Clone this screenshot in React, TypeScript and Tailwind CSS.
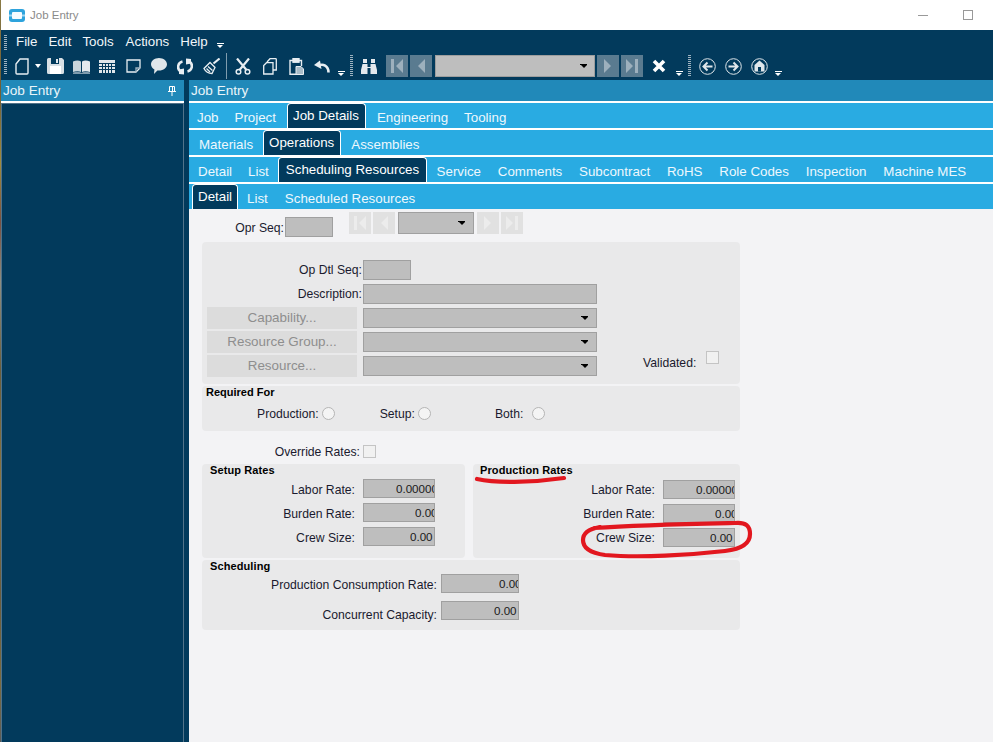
const iconColor = '#e8eef2';

type NavKind = 'first' | 'prev' | 'next' | 'last';

function Caret() {
  return <span className="block w-0 h-0 border-x-[3px] border-x-transparent border-t-[4px] border-t-white" />;
}

function OverflowCaret({ className }: { className: string }) {
  return (
    <span className={`flex flex-col items-center gap-px ${className}`}>
      <span className="block w-[7px] h-px bg-white" />
      <span className="block w-0 h-0 border-x-[3px] border-x-transparent border-t-[3px] border-t-white" />
    </span>
  );
}

function Grip({ className = '' }: { className?: string }) {
  return (
    <span className={`block w-[3px] shrink-0 bg-[repeating-linear-gradient(to_bottom,#9fb3c0_0,#9fb3c0_1px,transparent_1px,transparent_2px)] ${className}`} />
  );
}

function AppLogo() {
  return (
    <svg width="16" height="13" viewBox="0 0 16 13">
      <rect x="0" y="0" width="16" height="13" rx="3" fill="#2ea3dc" />
      <rect x="3" y="3" width="10" height="7" rx="1" fill="#f4fbff" />
      <rect x="0" y="5.500" width="3" height="2" fill="#9ed6f2" />
      <rect x="13" y="5.500" width="3" height="2" fill="#9ed6f2" />
    </svg>
  );
}

function NewDocIcon() {
  return (
    <svg width="14" height="17" viewBox="0 0 14 17" fill="none" stroke={iconColor} strokeWidth="1.400">
      <path d="M5 1h8v14a1 1 0 0 1-1 1H2a1 1 0 0 1-1-1V6z" />
    </svg>
  );
}

function SaveIcon() {
  return (
    <svg width="17" height="16" viewBox="0 0 17 16">
      <path d="M0 1.500A1.500 1.500 0 0 1 1.500 0H15l2 2v12.500a1.500 1.500 0 0 1-1.500 1.500h-14A1.500 1.500 0 0 1 0 14.500z" fill="#d7dfe4" />
      <rect x="4" y="0" width="8" height="6" fill="#023a5c" />
      <rect x="9" y="1" width="2" height="4" fill="#e4e9ed" />
      <rect x="3" y="8" width="11" height="8" fill="#fff" />
    </svg>
  );
}

function BookIcon() {
  return (
    <svg width="17" height="15" viewBox="0 0 17 15">
      <path d="M0 2.500C3 1 6 1 8 2.500V13C6 12 3 12 0 13z" fill="#c9d5dc" />
      <path d="M17 2.500C14 1 11 1 9 2.500V13C11 12 14 12 17 13z" fill="#e4e9ed" />
      <path d="M0 13.500C3 12.500 6 12.500 8.500 14C11 12.500 14 12.500 17 13.500V15H0z" fill="#7f9cae" />
    </svg>
  );
}

function GridIcon() {
  return (
    <svg width="16" height="13" viewBox="0 0 16 13">
      <rect width="16" height="13" fill="#dfe6ea" />
      <path d="M0 3.500h16M0 6.500h16M0 9.500h16M3.500 3v10M6.500 3v10M9.500 3v10M12.500 3v10" stroke="#023a5c" strokeWidth="1" />
    </svg>
  );
}

function NoteIcon() {
  return (
    <svg width="15" height="14" viewBox="0 0 15 14" fill="none" stroke={iconColor} strokeWidth="1.300">
      <path d="M1 1h13v8l-4 4H1z" />
      <path d="M14 9h-4v4" stroke="#9fb3c0" />
    </svg>
  );
}

function CommentIcon() {
  return (
    <svg width="16" height="16" viewBox="0 0 16 16">
      <path d="M8 0c4.400 0 8 2.800 8 6.300s-3.600 6.300-8 6.300c-.6 0-1.100 0-1.600-.1L3 16l.4-4.500C1.300 10.400 0 8.500 0 6.300 0 2.800 3.600 0 8 0z" fill="#dfe6ea" />
    </svg>
  );
}

function RefreshIcon() {
  return (
    <svg width="16" height="17" viewBox="0 0 16 17" fill="none" stroke={iconColor} strokeWidth="2.600">
      <path d="M5.500 3.500A5.500 5.500 0 0 0 3 13" />
      <path d="M10.500 13.500A5.500 5.500 0 0 0 13 4" />
      <path d="M9 0.500v6l5-1V1z" fill={iconColor} stroke="none" />
      <path d="M7 16.500v-6l-5 1V16z" fill={iconColor} stroke="none" />
    </svg>
  );
}

function BroomIcon() {
  return (
    <svg width="17" height="17" viewBox="0 0 17 17" fill="none" stroke={iconColor} strokeWidth="1.300">
      <path d="M16.500 0.500L10.500 5.500" strokeWidth="2" />
      <path d="M7 4.500L12 9.500 9 15.500C6 15.500 2.500 13.500 1 10.500z" />
      <path d="M5 8.500L9.500 12.500M3.500 10.500L7 14" />
    </svg>
  );
}

function ScissorsIcon() {
  return (
    <svg width="16" height="17" viewBox="0 0 16 17" fill="none" stroke={iconColor}>
      <path d="M2 0.500L11.500 12M14 0.500L4.500 12" strokeWidth="2.200" />
      <circle cx="3.500" cy="13.800" r="2.300" strokeWidth="1.500" />
      <circle cx="12.500" cy="13.800" r="2.300" strokeWidth="1.500" />
    </svg>
  );
}

function CopyIcon() {
  return (
    <svg width="14" height="17" viewBox="0 0 14 17" fill="none" stroke={iconColor} strokeWidth="1.300">
      <path d="M4 4V4L7 0.700h5.500a.8.800 0 0 1 .8.800V12H10" />
      <path d="M3.500 4.700h6.500V16H0.700V7.500z" />
    </svg>
  );
}

function PasteIcon() {
  return (
    <svg width="15" height="17" viewBox="0 0 15 17" fill="none" stroke={iconColor} strokeWidth="1.400">
      <path d="M4 2.500H1v13.800h6M10 2.500h2.500V8" />
      <rect x="4" y="0.700" width="6" height="3.500" fill={iconColor} />
      <path d="M7 8.500h5l2.500 2.500v5.500H7z" fill="#a9bcc8" stroke={iconColor} strokeWidth="1" />
    </svg>
  );
}

function UndoIcon() {
  return (
    <svg width="16" height="13" viewBox="0 0 16 13" fill="none" stroke={iconColor}>
      <path d="M14.500 12.500C14.500 6 9 3 4 6" strokeWidth="2.600" />
      <path d="M0 5l6-4.500 1.500 8.500z" fill={iconColor} stroke="none" />
    </svg>
  );
}

function PinIcon() {
  return (
    <svg width="8" height="10" viewBox="0 0 8 10" fill="none" stroke="#fff">
      <path d="M1.500 0.500h5v5h-5z" />
      <path d="M4.500 1v4" />
      <path d="M0 5.500h8M4 6v4" />
    </svg>
  );
}

function BinocularsIcon() {
  return (
    <svg width="16" height="15" viewBox="0 0 16 15">
      <rect x="2" y="0" width="4" height="4" fill="#e4e9ed" />
      <rect x="10" y="0" width="4" height="4" fill="#e4e9ed" />
      <path d="M1.500 5h5v3h3V5h5L16 11v4H9.500V9h-3v6H0v-4z" fill="#e4e9ed" />
    </svg>
  );
}

function CircleArrow({ dir }: { dir: 'left' | 'right' }) {
  return (
    <svg width="17" height="17" viewBox="0 0 17 17" fill="none" stroke="#dfe6ea">
      <circle cx="8.500" cy="8.500" r="7.800" strokeWidth="1" />
      <path d={dir === 'left' ? 'M13.500 8.500H4.500M8.500 4.500L4.500 8.500 8.500 12.500' : 'M3.500 8.500h9M8.500 4.500L12.500 8.500 8.500 12.500'} strokeWidth="2" />
    </svg>
  );
}

function HomeIcon() {
  return (
    <svg width="17" height="17" viewBox="0 0 17 17">
      <circle cx="8.500" cy="8.500" r="7.800" fill="none" stroke="#dfe6ea" />
      <path d="M8.500 2.500L13.500 7V13.500H3.500V7z" fill="#dfe6ea" />
      <rect x="7" y="9" width="3" height="4.500" fill="#023a5c" />
    </svg>
  );
}

function NavGlyph({ kind, color }: { kind: NavKind; color: string }) {
  const paths = {
    first: 'M2 1h3v14H2zM14 1v14L7 8z',
    prev: 'M12 1v14L5 8z',
    next: 'M4 1v14l7-7z',
    last: 'M11 1h3v14h-3zM2 1v14l7-7z',
  };
  return (
    <svg width="16" height="16" viewBox="0 0 16 16">
      <path d={paths[kind]} fill={color} />
    </svg>
  );
}

function ToolSlot({ children, className = 'w-[26px]' }: { children: React.ReactNode; className?: string }) {
  return <span className={`flex items-center justify-center shrink-0 ${className}`}>{children}</span>;
}

function TopNavButton({ kind, className }: { kind: NavKind; className: string }) {
  return (
    <span className={`flex items-center justify-center w-[22px] h-[22px] bg-[#5a7b90] shrink-0 ${className}`}>
      <NavGlyph kind={kind} color="#9db0bd" />
    </span>
  );
}

function Tab({ label, active, className = '' }: { label: string; active?: boolean; className?: string }) {
  if (active) {
    return (
      <span className={`flex items-start pt-[2px] h-full whitespace-nowrap bg-[#023a5c] text-white border border-b-0 border-white rounded-t-[4px] ${className}`}>
        {label}
      </span>
    );
  }
  return <span className={`flex items-center pt-[5px] h-full whitespace-nowrap text-[#eef8fd] ${className}`}>{label}</span>;
}

function Field({ className = '', children }: { className?: string; children?: React.ReactNode }) {
  return (
    <div className={`flex items-center bg-[#bebebe] border border-[#a0a0a0] ${className}`}>
      {children}
    </div>
  );
}

function ComboArrow() {
  return (
    <span className="flex flex-col items-center">
      <span className="block w-[7px] h-px bg-black" />
      <span className="block w-0 h-0 border-x-[3px] border-x-transparent border-t-[3px] border-t-black" />
    </span>
  );
}

function Combo({ className = '' }: { className?: string }) {
  return (
    <Field className={`justify-end pr-[8px] ${className}`}>
      <ComboArrow />
    </Field>
  );
}

function RateRow({
  label,
  value,
  labelClass,
  inputClass,
  pad,
  className = '',
}: {
  label: string;
  value: string;
  labelClass: string;
  inputClass: string;
  pad: string;
  className?: string;
}) {
  return (
    <div className={`flex items-start ${className}`}>
      <span className={`text-right leading-[15px] shrink-0 ${labelClass}`}>{label}</span>
      <Field className={`h-[19px] shrink-0 ${inputClass} ${pad}`}>
        <span className="block flex-1 overflow-hidden whitespace-nowrap text-[11.6px] leading-[15px] pb-px text-[#1a1a1a]">{value}</span>
      </Field>
    </div>
  );
}

function Radio() {
  return <span className="block w-[13px] h-[13px] -mt-[2px] rounded-full border border-[#b5b5b5] bg-[#f4f4f4]" />;
}

function Check({ className = '' }: { className?: string }) {
  return <span className={`block w-[13px] h-[13px] border border-[#c4c4c4] bg-[#f1f1f1] ${className}`} />;
}

function ResourceButton({ label }: { label: string }) {
  return (
    <div className="flex items-center justify-center w-[150px] h-[22px] bg-[#dcdcdc] text-[#8e8e8e] text-[13.4px]">
      {label}
    </div>
  );
}

function FormNavButton({ kind }: { kind: NavKind }) {
  return (
    <span className="flex items-center justify-center w-[22px] h-[22px] bg-[#e1e1e1]">
      <NavGlyph kind={kind} color="#ececec" />
    </span>
  );
}

export default function App() {
  return (
    <div className="relative flex w-[993px] h-[742px] overflow-hidden bg-[#023a5c] font-['Liberation_Sans',Arial,sans-serif] text-[12.2px] text-[#1a1a2e]">
      <div className="w-px shrink-0 bg-[linear-gradient(to_bottom,#8a7a45_0,#6f5d36_12%,#a08a3a_22%,#7a5040_30%,#8d8d80_38%,#6b5d3a_50%,#8a7440_65%,#6a5b3c_80%,#7b6a3e_92%,#5c5c58_100%)]" />

      <div className="flex flex-col flex-1 min-w-0">
        <header className="flex items-center h-[30px] shrink-0 bg-white pl-[8px]">
          <AppLogo />
          <span className="ml-[5px] pt-[2px] text-[#8a8a8a] text-[11.5px]">Job Entry</span>
          <span className="ml-auto block w-[10px] h-px bg-[#999] mr-[35px]" />
          <span className="block w-[10px] h-[10px] border border-[#999] mr-[20px]" />
        </header>

        <div className="flex items-center h-[24px] shrink-0 pl-[3px] text-[13.33px] text-[#f1f6f9]">
          <Grip className="h-[15px]" />
          <span className="ml-[9px] mr-[11px]">File</span>
          <span className="mr-[11px]">Edit</span>
          <span className="mr-[12px]">Tools</span>
          <span className="mr-[11px]">Actions</span>
          <span>Help</span>
          <OverflowCaret className="ml-[9px] mt-[7px]" />
        </div>

        <div className="flex items-center h-[26px] shrink-0 pl-[3px] pb-[2px]">
          <Grip className="h-[15px] mr-[4px]" />
          <ToolSlot className="w-[22px]"><NewDocIcon /></ToolSlot>
          <ToolSlot className="w-[10px]"><Caret /></ToolSlot>
          <ToolSlot className="w-[25px]"><SaveIcon /></ToolSlot>
          <ToolSlot><BookIcon /></ToolSlot>
          <ToolSlot><GridIcon /></ToolSlot>
          <ToolSlot><NoteIcon /></ToolSlot>
          <ToolSlot><CommentIcon /></ToolSlot>
          <ToolSlot><RefreshIcon /></ToolSlot>
          <ToolSlot><BroomIcon /></ToolSlot>
          <span className="block w-px h-[26px] bg-[#7f9cae] mx-[2px] shrink-0" />
          <ToolSlot className="w-[28px]"><ScissorsIcon /></ToolSlot>
          <ToolSlot><CopyIcon /></ToolSlot>
          <ToolSlot><PasteIcon /></ToolSlot>
          <ToolSlot><UndoIcon /></ToolSlot>
          <ToolSlot className="w-[12px]"><OverflowCaret className="mt-[14px]" /></ToolSlot>
          <Grip className="h-[22px] ml-[3px] mr-[4px]" />
          <ToolSlot className="w-[24px]"><BinocularsIcon /></ToolSlot>
          <TopNavButton kind="first" className="ml-[5px]" />
          <TopNavButton kind="prev" className="ml-[2px]" />
          <div className="flex items-center justify-end w-[160px] h-[22px] ml-[3px] pr-[7px] bg-[#bebebe] border border-[#9e9e9e] shrink-0">
            <ComboArrow />
          </div>
          <TopNavButton kind="next" className="ml-[2px]" />
          <TopNavButton kind="last" className="ml-[2px]" />
          <ToolSlot className="w-[32px]">
            <svg width="14" height="14" viewBox="0 0 14 14"><path d="M2 2l10 10M12 2L2 12" stroke="#fff" strokeWidth="3.600" /></svg>
          </ToolSlot>
          <ToolSlot className="w-[8px]"><OverflowCaret className="mt-[14px]" /></ToolSlot>
          <Grip className="h-[22px] ml-[5px] mr-[3px]" />
          <ToolSlot><CircleArrow dir="left" /></ToolSlot>
          <ToolSlot><CircleArrow dir="right" /></ToolSlot>
          <ToolSlot><HomeIcon /></ToolSlot>
          <ToolSlot className="w-[12px]"><OverflowCaret className="mt-[14px]" /></ToolSlot>
        </div>

        <div className="flex flex-1 min-h-0">
          <aside className="flex flex-col w-[183px] shrink-0">
            <div className="flex items-center justify-between h-[21px] bg-[#2189b9] pl-[2px] pr-[8px] pt-px text-[13.6px] text-[#eaf5fa]">
              <span>Job Entry</span>
              <PinIcon />
            </div>
            <div className="h-[2px] bg-white" />
            <div className="flex-1 border border-[#52738a] border-b-0" />
          </aside>

          <main className="flex flex-col flex-1 min-w-0 ml-[5px] bg-white">
            <div className="flex items-center h-[21px] bg-[#2189b9] pl-[2px] pt-px text-[13.6px] text-[#eaf5fa]">Job Entry</div>

            <div className="flex flex-col gap-[2px] mt-[2px] text-[13.33px]">
              <div className="flex h-[25px] bg-[#29abe2]">
                <Tab label="Job" className="px-2" />
                <Tab label="Project" className="px-2" />
                <Tab label="Job Details" active className="pl-[5px] pr-[6px] ml-[3px] mr-[3px]" />
                <Tab label="Engineering" className="px-2" />
                <Tab label="Tooling" className="px-2" />
              </div>
              <div className="flex h-[25px] bg-[#29abe2] pl-[2px]">
                <Tab label="Materials" className="px-2" />
                <Tab label="Operations" active className="pl-[5px] pr-[6px] ml-[2px] mr-[2px]" />
                <Tab label="Assemblies" className="px-2" />
              </div>
              <div className="flex h-[25px] bg-[#29abe2] pl-px">
                <Tab label="Detail" className="px-2" />
                <Tab label="List" className="px-2" />
                <Tab label="Scheduling Resources" active className="px-[7px] ml-px mr-px" />
                <Tab label="Service" className="px-[8.4px]" />
                <Tab label="Comments" className="px-[8.4px]" />
                <Tab label="Subcontract" className="px-[8.4px]" />
                <Tab label="RoHS" className="px-[8.4px]" />
                <Tab label="Role Codes" className="px-[8.4px]" />
                <Tab label="Inspection" className="px-[8.4px]" />
                <Tab label="Machine MES" className="px-[8.4px]" />
              </div>
              <div className="flex h-[25px] bg-[#29abe2] pl-[3px]">
                <Tab label="Detail" active className="px-[5px] mr-px" />
                <Tab label="List" className="px-2" />
                <Tab label="Scheduled Resources" className="px-2 ml-px" />
              </div>
            </div>

            <div className="flex-1 bg-[#f3f3f5] pl-[13px] pt-[3px]">
              <div className="flex items-start w-[527px] h-[30px]">
                <span className="w-[82px] text-right pt-[7px] shrink-0">Opr Seq:</span>
                <Field className="w-[48px] h-[20px] ml-px mt-[5px] shrink-0" />
                <div className="flex items-center gap-[2px] ml-[16px]">
                  <FormNavButton kind="first" />
                  <FormNavButton kind="prev" />
                  <Combo className="w-[76px] h-[22px] ml-px mr-px" />
                  <FormNavButton kind="next" />
                  <FormNavButton kind="last" />
                </div>
              </div>

              <section className="relative w-[538px] h-[142px] bg-[#e9e9ea] rounded-[4px] pl-[5px] pt-[17px]">
                <div className="flex flex-col gap-[2px]">
                  <div className="flex items-center gap-[6px] h-[22px]">
                    <span className="w-[155px] -mr-[5px] text-right">Op Dtl Seq:</span>
                    <Field className="w-[48px] h-[20px]" />
                  </div>
                  <div className="flex items-center gap-[6px] h-[22px]">
                    <span className="w-[155px] -mr-[5px] text-right">Description:</span>
                    <Field className="w-[234px] h-[20px]" />
                  </div>
                  <div className="flex items-center gap-[6px] h-[22px]">
                    <ResourceButton label="Capability..." />
                    <Combo className="w-[234px] h-[20px]" />
                  </div>
                  <div className="flex items-center gap-[6px] h-[22px]">
                    <ResourceButton label="Resource Group..." />
                    <Combo className="w-[234px] h-[20px]" />
                  </div>
                  <div className="flex items-center gap-[6px] h-[22px]">
                    <ResourceButton label="Resource..." />
                    <Combo className="w-[234px] h-[20px]" />
                  </div>
                </div>
                <div className="absolute left-[441px] top-[109px] flex items-start gap-[10px]">
                  <span className="pt-[3px]">Validated:</span>
                  <Check />
                </div>
              </section>

              <section className="w-[538px] h-[45px] mt-[2px] bg-[#e9e9ea] rounded-[4px] pl-[4px]">
                <div className="font-bold text-[11px] leading-[13px] text-black">Required For</div>
                <div className="flex items-center mt-[6px] pl-[51px]">
                  <span>Production:</span>
                  <span className="ml-[3px]"><Radio /></span>
                  <span className="ml-[45px]">Setup:</span>
                  <span className="ml-[3px]"><Radio /></span>
                  <span className="ml-[64px]">Both:</span>
                  <span className="ml-[9px]"><Radio /></span>
                </div>
              </section>

              <div className="flex items-center h-[13px] mt-[14px]">
                <span className="w-[158px] pt-[2px] text-right">Override Rates:</span>
                <Check className="ml-[3px]" />
              </div>

              <div className="flex gap-[8px] mt-[6px]">
                <section className="w-[263px] h-[94px] bg-[#e9e9ea] rounded-[4px] pl-[8px]">
                  <div className="font-bold text-[11px] leading-[13px] tracking-[0.1px] text-black">Setup Rates</div>
                  <RateRow label="Labor Rate:" value="0.00000" labelClass="w-[145px] pt-[4px]" inputClass="w-[72px] ml-[8px]" pad="pl-[32px]" className="mt-[2px] h-[19px]" />
                  <RateRow label="Burden Rate:" value="0.00" labelClass="w-[145px] pt-[4px]" inputClass="w-[72px] ml-[8px]" pad="pl-[51px]" className="mt-[5px] h-[19px]" />
                  <RateRow label="Crew Size:" value="0.00" labelClass="w-[145px] pt-[4px]" inputClass="w-[72px] ml-[8px]" pad="pl-[46px]" className="mt-[5px] h-[19px]" />
                </section>
                <section className="w-[267px] h-[94px] bg-[#e9e9ea] rounded-[4px] pl-[7px]">
                  <div className="font-bold text-[11px] leading-[13px] tracking-[0.1px] text-black">Production Rates</div>
                  <RateRow label="Labor Rate:" value="0.00000" labelClass="w-[175px] pt-[3px]" inputClass="w-[72px] ml-[8px]" pad="pl-[32px]" className="mt-[3px] h-[19px]" />
                  <RateRow label="Burden Rate:" value="0.00" labelClass="w-[175px] pt-[3px]" inputClass="w-[72px] ml-[8px]" pad="pl-[51px]" className="mt-[5px] h-[19px]" />
                  <RateRow label="Crew Size:" value="0.00" labelClass="w-[175px] pt-[3px]" inputClass="w-[72px] ml-[8px]" pad="pl-[46px]" className="mt-[5px] h-[19px]" />
                </section>
              </div>

              <section className="w-[538px] h-[70px] mt-[2px] bg-[#e9e9ea] rounded-[4px] pl-[8px]">
                <div className="font-bold text-[11px] leading-[13px] tracking-[0.1px] text-black">Scheduling</div>
                <RateRow label="Production Consumption Rate:" value="0.00" labelClass="w-[227px] pt-[4px]" inputClass="w-[78px] ml-[4px]" pad="pl-[57px]" className="mt-px h-[19px]" />
                <RateRow label="Concurrent Capacity:" value="0.00" labelClass="w-[227px] pt-[7px]" inputClass="w-[78px] ml-[4px]" pad="pl-[52px]" className="mt-[8px] h-[19px]" />
              </section>
            </div>
          </main>
        </div>
      </div>

      <svg className="absolute inset-0 pointer-events-none" width="993" height="742" viewBox="0 0 993 742" fill="none" stroke="#e2171f" strokeWidth="4.200" strokeLinecap="round">
        <path d="M477 479C495 483 530 483 564 478" />
        <path d="M594 528C640 525 690 524 735 523C746 522 750 526 750 534C750 543 742 549 725 551C690 555 640 558 605 555C590 553 583 548 583 540C583 533 588 529 600 527" />
      </svg>
    </div>
  );
}
